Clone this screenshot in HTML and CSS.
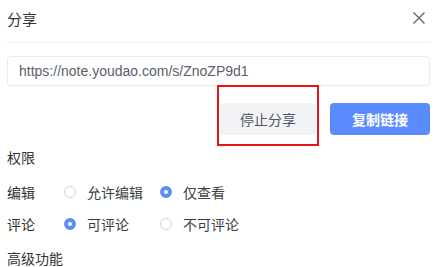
FILE: index.html
```html
<!DOCTYPE html>
<html lang="zh-CN">
<head>
    <meta charset="UTF-8">
    <meta name="viewport" content="width=device-width, initial-scale=1.0">
    <title>分享</title>
    <link rel="stylesheet" href="styles.css">
</head>
<body>
    <div class="dialog">
        <div class="header">
            <span class="title">分享</span>
            <svg class="close" width="14" height="14" viewBox="0 0 14 14">
                <path d="M1.5 1.5 L12.5 12.5 M12.5 1.5 L1.5 12.5" stroke="#5f6674" stroke-width="1.4" fill="none"/>
            </svg>
        </div>

        <div class="link-box">https://note.youdao.com/s/ZnoZP9d1</div>

        <div class="actions">
            <div class="mark">
                <button class="btn btn-stop">停止分享</button>
            </div>
            <button class="btn btn-copy">复制链接</button>
        </div>

        <!-- 权限 -->
        <div class="section">权限</div>
        <div class="perm">
            <div class="perm-row">
                <span class="perm-label">编辑</span>
                <span class="option"><i class="radio"></i>允许编辑</span>
                <span class="option"><i class="radio checked"></i>仅查看</span>
            </div>
            <div class="perm-row">
                <span class="perm-label">评论</span>
                <span class="option"><i class="radio checked"></i>可评论</span>
                <span class="option"><i class="radio"></i>不可评论</span>
            </div>
        </div>

        <div class="section section-more">高级功能</div>
    </div>
</body>
</html>
```

FILE: styles.css
```css
body {
    margin: 0;
    background-color: #fff;
    font-family: "Liberation Sans", "Noto Sans CJK SC", sans-serif;
    color: #333;
    overflow: hidden;
}
.dialog {
    padding: 0 10px 0 7px;
}
.header {
    height: 42px;
    display: flex;
    align-items: center;
    justify-content: space-between;
    border-bottom: 1px solid #eef0f3;
}
.title {
    font-size: 15px;
    color: #333;
    margin-top: -6px;
}
.close {
    margin-right: 4px;
    margin-top: -6px;
}
.link-box {
    margin-top: 13px;
    height: 28px;
    line-height: 28px;
    border: 1px solid #e9ebee;
    border-radius: 4px;
    padding: 0 11px;
    font-size: 14px;
    color: #5a606c;
}
.actions {
    margin-top: 17px;
    display: flex;
    justify-content: flex-end;
    gap: 14px;
}
.mark {
    position: relative;
}
/* 红色标注框 */
.mark::after {
    content: "";
    position: absolute;
    top: -18px;
    bottom: -11px;
    left: -3px;
    right: -3px;
    border: 2px solid #e8141b;
}
.btn {
    height: 32px;
    border: none;
    border-radius: 4px;
    font-family: "Liberation Sans", "Noto Sans CJK SC", sans-serif;
    font-size: 14px;
    padding: 0;
    cursor: pointer;
}
.btn-stop {
    width: 96px;
    background-color: #f1f3f6;
    color: #4f5562;
}
.btn-copy {
    width: 100px;
    background-color: #5b8cff;
    color: #fff;
    font-weight: bold;
}
.section {
    margin-top: 13px;
    line-height: 20px;
    font-size: 14px;
    color: #333;
}
.perm {
    margin-top: 8px;
}
.perm-row {
    display: grid;
    grid-template-columns: 57px 96px auto;
    align-items: center;
    height: 32px;
    font-size: 14px;
}
.option {
    display: flex;
    align-items: center;
    gap: 11px;
    color: #3c3f45;
}
.radio {
    width: 12px;
    height: 12px;
    box-sizing: border-box;
    border: 1px solid #cfd3da;
    border-radius: 50%;
    background-color: #fff;
}
.radio.checked {
    border: 4px solid #5b8cff;
    background-color: #fff;
}
.section-more {
    margin-top: 9px;
}
```
